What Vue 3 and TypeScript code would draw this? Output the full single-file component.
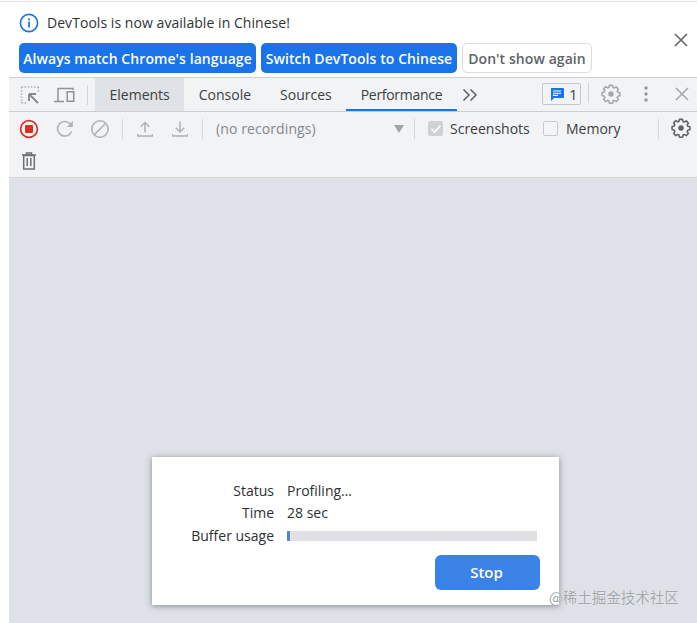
<script setup lang="ts">
const tabs = ['Elements', 'Console', 'Sources', 'Performance']
const gear = 'M9.3 1.5h3.4l.5 2.4 1.4.6 2.1-1.3 2.4 2.4-1.3 2.1.6 1.4 2.4.5v3.4l-2.4.5-.6 1.4 1.3 2.1-2.4 2.4-2.1-1.3-1.4.6-.5 2.4H9.3l-.5-2.4-1.4-.6-2.1 1.3-2.4-2.4 1.3-2.1-.6-1.4L1.2 12.7V9.3l2.4-.5.6-1.4-1.3-2.1 2.4-2.4 2.1 1.3 1.4-.6z'
</script>

<template>
  <div class="page">
    <section class="infobar">
      <div class="info-line">
        <svg class="info-icon" width="20" height="20" viewBox="0 0 20 20">
          <circle cx="10" cy="10" r="8.6" fill="none" stroke="#1a73e8" stroke-width="1.6" />
          <rect x="9.1" y="8.6" width="1.8" height="6" fill="#1a73e8" />
          <rect x="9.1" y="5.4" width="1.8" height="1.9" fill="#1a73e8" />
        </svg>
        <span>DevTools is now available in Chinese!</span>
      </div>
      <div class="info-actions">
        <button class="btn primary first">Always match Chrome's language</button>
        <button class="btn primary second">Switch DevTools to Chinese</button>
        <button class="btn plain">Don't show again</button>
      </div>
      <svg class="info-close" width="14" height="14" viewBox="0 0 14 14">
        <path d="M1 1l12 12M13 1L1 13" stroke="#5f6368" stroke-width="1.6" fill="none" />
      </svg>
    </section>

    <div class="devtools">
      <nav class="tabbar">
        <svg class="ic sel" width="20" height="20" viewBox="0 0 20 20">
          <path d="M1.5 2h17M1.5 2v16M1.5 18h6M18.500 2v6" stroke="#b0b3b7" stroke-width="1.5" stroke-dasharray="1.5 1.6" fill="none" />
          <path d="M18 18 9 9M9 9v7M9 9h7" stroke="#85888c" stroke-width="1.9" fill="none" />
        </svg>
        <svg class="ic dev" width="22" height="18" viewBox="0 0 22 18">
          <path d="M5 15V2.500h15V4M1 15.500h10" stroke="#8f9296" stroke-width="1.5" fill="none" />
          <rect x="14.200" y="5.800" width="6.500" height="9.500" fill="none" stroke="#8f9296" stroke-width="1.5" />
        </svg>
        <i class="sep tab-sep"></i>
        <div class="tabs">
          <div v-for="t in tabs" :key="t" class="tab" :class="{ hover: t === 'Elements', active: t === 'Performance' }">{{ t }}</div>
        </div>
        <svg class="more" width="16" height="14" viewBox="0 0 16 14">
          <path d="M1.500 1.500 7 7l-5.500 5.500M8.500 1.500 14 7l-5.500 5.500" stroke="#5f6368" stroke-width="1.500" fill="none" />
        </svg>
        <div class="issues">
          <svg width="14" height="13" viewBox="0 0 14 13">
            <path d="M1 0h12a1 1 0 0 1 1 1v8a1 1 0 0 1-1 1H4l-3 3V1a1 1 0 0 1 0-1z" fill="#1a73e8" />
            <path d="M3 3h8M3 5.200h8M3 7.400h5" stroke="#fff" stroke-width="1.100" />
          </svg>
          <span>1</span>
        </div>
        <i class="sep issues-sep"></i>
        <svg class="ic tab-gear" width="20" height="20" viewBox="0 0 22 22">
          <path :d="gear" fill="none" stroke="#a4a7ab" stroke-width="1.700" stroke-linejoin="round" />
          <circle cx="11" cy="11" r="3" fill="#a4a7ab" />
        </svg>
        <svg class="ic dots" width="4" height="16" viewBox="0 0 4 16">
          <circle cx="2" cy="2" r="1.700" fill="#96999d" />
          <circle cx="2" cy="8" r="1.700" fill="#96999d" />
          <circle cx="2" cy="14" r="1.700" fill="#96999d" />
        </svg>
        <svg class="ic tab-close" width="14" height="14" viewBox="0 0 14 14">
          <path d="M1 1l12 12M13 1L1 13" stroke="#a4a7ab" stroke-width="1.500" fill="none" />
        </svg>
      </nav>

      <div class="toolbar">
        <div class="tool-row">
          <svg class="rec" width="20" height="20" viewBox="0 0 20 20">
            <circle cx="10" cy="10" r="8.400" fill="none" stroke="#d93025" stroke-width="1.700" />
            <rect x="6" y="6" width="8" height="8" rx="1" fill="#d93025" />
          </svg>
          <svg class="reload" width="20" height="20" viewBox="0 0 20 20">
            <path d="M16.600 12.500A7.300 7.300 0 1 1 15.400 5" fill="none" stroke="#aeb1b5" stroke-width="1.600" />
            <path d="M17.800 2v6h-6z" fill="#aeb1b5" />
          </svg>
          <svg class="clear" width="20" height="20" viewBox="0 0 20 20">
            <circle cx="10" cy="10" r="8.200" fill="none" stroke="#aeb1b5" stroke-width="1.600" />
            <path d="M4.500 15.500 15.500 4.500" stroke="#aeb1b5" stroke-width="1.600" />
          </svg>
          <i class="sep s1"></i>
          <svg class="up" width="16" height="16" viewBox="0 0 16 16">
            <path d="M8 11.500V1.500M3.800 5.700 8 1.500l4.200 4.200M.5 13v2h15v-2" stroke="#aeb1b5" stroke-width="1.500" fill="none" />
          </svg>
          <svg class="down" width="16" height="16" viewBox="0 0 16 16">
            <path d="M8 .5v10.500M3.800 6.800 8 11l4.200-4.200M.5 13v2h15v-2" stroke="#aeb1b5" stroke-width="1.500" fill="none" />
          </svg>
          <i class="sep s2"></i>
          <span class="recordings">(no recordings)</span>
          <i class="caret"></i>
          <i class="sep s3"></i>
          <label class="check">
            <span class="box checked">
              <svg width="12" height="10" viewBox="0 0 12 10"><path d="M1.500 5 4.500 8 10.500 1.500" stroke="#fff" stroke-width="1.800" fill="none" /></svg>
            </span>
            <span>Screenshots</span>
          </label>
          <label class="check memory">
            <span class="box"></span>
            <span>Memory</span>
          </label>
          <i class="sep s4"></i>
          <svg class="tool-gear" width="20" height="20" viewBox="0 0 22 22">
            <path :d="gear" fill="none" stroke="#5f6368" stroke-width="1.700" stroke-linejoin="round" />
            <circle cx="11" cy="11" r="3" fill="#5f6368" />
          </svg>
        </div>
        <div class="trash-row">
          <svg width="14" height="18" viewBox="0 0 14 18">
            <path d="M0 3h14M4.500 3V1h5v2" stroke="#6b6f73" stroke-width="1.500" fill="none" />
            <path d="M1.700 3.500h10.600V17H1.700z" stroke="#6b6f73" stroke-width="1.500" fill="none" />
            <path d="M5.200 6v8M8.800 6v8" stroke="#6b6f73" stroke-width="1.500" />
          </svg>
        </div>
      </div>

      <main class="stage">
        <div class="dialog">
          <div class="grid">
            <span class="label">Status</span><span class="value">Profiling…</span>
            <span class="label">Time</span><span class="value">28 sec</span>
            <span class="label">Buffer usage</span>
            <div class="bar"><div class="bar-fill" :style="{ width: '1%' }"></div></div>
          </div>
          <div class="dialog-foot"><button class="stop">Stop</button></div>
        </div>
        <div class="mark">@稀土掘金技术社区</div>
      </main>
    </div>
  </div>
</template>

<style>
html, body { margin: 0; background: #fff; }
</style>

<style scoped>
.page {
  width: 697px;
  height: 623px;
  overflow: hidden;
  background: #fff;
  font-family: "Open Sans", "Noto Sans", sans-serif;
  color: #303336;
  font-size: 14px;
  display: flex;
  flex-direction: column;
  box-sizing: border-box;
  padding-top: 1px;
}
svg { display: block; flex: none; }
.infobar { height: 76px; flex: none; position: relative; padding-left: 19px; box-sizing: border-box; border-top: 1px solid #e1e2e4; }
.info-line { display: flex; align-items: center; gap: 8px; height: 41px; font-size: 14px; color: #303336; letter-spacing: 0.05px; }
.info-actions { display: flex; gap: 5px; }
.btn {
  height: 30px;
  box-sizing: border-box;
  border-radius: 5px;
  font: 600 14px "Open Sans", sans-serif;
  letter-spacing: 0.08px;
  padding: 0;
  white-space: nowrap;
}
.primary { background: #1a73e8; color: #fff; border: 0; }
.first { width: 237px; }
.second { width: 196px; }
.plain { width: 130px; background: #fff; border: 1px solid #dadce0; color: #5f6368; }
.info-close { position: absolute; right: 9px; top: 31px; }
.devtools { flex: 1; margin-left: 9px; display: flex; flex-direction: column; min-height: 0; }
.tabbar {
  height: 35px;
  flex: none;
  box-sizing: border-box;
  background: #f1f3f4;
  border-top: 1px solid #cdd0d3;
  border-bottom: 1px solid #cbcdd0;
  display: flex;
  align-items: center;
  position: relative;
}
.sel { margin-left: 11px; }
.dev { margin-left: 13px; }
.sep { display: block; width: 1px; background: #d3d5d8; flex: none; }
.tab-sep { height: 20px; margin: 0 7px 0 12px; }
.tabs { display: flex; height: 100%; }
.tab { display: flex; align-items: center; padding: 0 14.500px; font-size: 14px; color: #3c4043; }
.hover { background: #dfe2e6; }
.active { box-shadow: inset 0 -2px 0 #1a73e8; letter-spacing: -0.3px; }
.more { margin-left: 5px; }
.issues {
  position: absolute;
  left: 533px;
  top: 5px;
  width: 39px;
  height: 22px;
  box-sizing: border-box;
  border: 1px solid #c4c7cb;
  border-radius: 2px;
  display: flex;
  align-items: center;
  gap: 5px;
  padding-left: 7px;
  color: #45484c;
  font-size: 15px;
}
.issues-sep { position: absolute; left: 579px; top: 5px; height: 20px; }
.tab-gear { position: absolute; left: 592px; top: 6px; }
.dots { position: absolute; left: 635px; top: 8px; }
.tab-close { position: absolute; left: 666px; top: 9px; }
.toolbar { height: 66px; flex: none; box-sizing: border-box; background: #f1f3f4; border-bottom: 1px solid #d5d7da; display: flex; flex-direction: column; }
.tool-row { height: 33px; display: flex; align-items: center; position: relative; flex: none; }
.rec { margin-left: 10px; }
.reload { margin-left: 16px; }
.clear { margin-left: 15px; }
.s1 { height: 20px; margin: 0 14px 0 12px; }
.down { margin-left: 19px; }
.s2 { height: 20px; margin: 0 13px 0 14px; }
.recordings { color: #85888c; letter-spacing: 0.1px; }
.caret { position: absolute; left: 385px; top: 13px; border-left: 5px solid transparent; border-right: 5px solid transparent; border-top: 8px solid #a0a3a7; }
.s3 { position: absolute; left: 405px; top: 7px; height: 20px; }
.check { position: absolute; left: 419px; top: 0; height: 33px; display: flex; align-items: center; gap: 7px; color: #3c4043; }
.memory { left: 534px; gap: 8px; }
.box { width: 15px; height: 15px; box-sizing: border-box; border: 1px solid #c8cacd; border-radius: 2px; background: #f4f5f6; display: flex; align-items: center; justify-content: center; }
.checked { background: #cfd1d4; border-color: #cfd1d4; }
.s4 { position: absolute; left: 649px; top: 7px; height: 20px; }
.tool-gear { position: absolute; left: 662px; top: 6px; }
.trash-row { height: 31px; padding-left: 13px; display: flex; align-items: center; }
.stage { flex: 1; background: #dee1e7; position: relative; }
.dialog {
  position: absolute;
  left: 143px;
  top: 279px;
  width: 407px;
  height: 148px;
  background: #fff;
  box-shadow: 0 1px 6px rgba(60, 64, 67, .55);
  box-sizing: border-box;
}
.grid {
  display: grid;
  grid-template-columns: 122px 250px;
  column-gap: 13px;
  row-gap: 0;
  align-items: center;
  padding-top: 22px;
  font-size: 14px;
  color: #2d3033;
  grid-auto-rows: 22.500px;
}
.label { text-align: right; }
.bar { height: 10px; margin-top: 2px; background: #dfe1e5; }
.bar-fill { height: 100%; background: #4a86dc; min-width: 2px; }
.dialog-foot { display: flex; justify-content: flex-end; padding: 8.500px 19px 0 0; }
.stop {
  width: 105px;
  height: 35px;
  background: #3b82e6;
  border: 0;
  border-radius: 6px;
  color: #fff;
  font: 600 15px "Open Sans", sans-serif;
  padding: 0 2px 2px 0;
}
.mark {
  position: absolute;
  left: 540px;
  top: 408px;
  font: 14.500px "Noto Sans CJK SC", sans-serif;
  color: #a3a6ab;
  white-space: nowrap;
  text-shadow: 0 0 1px #fff;
}
</style>
